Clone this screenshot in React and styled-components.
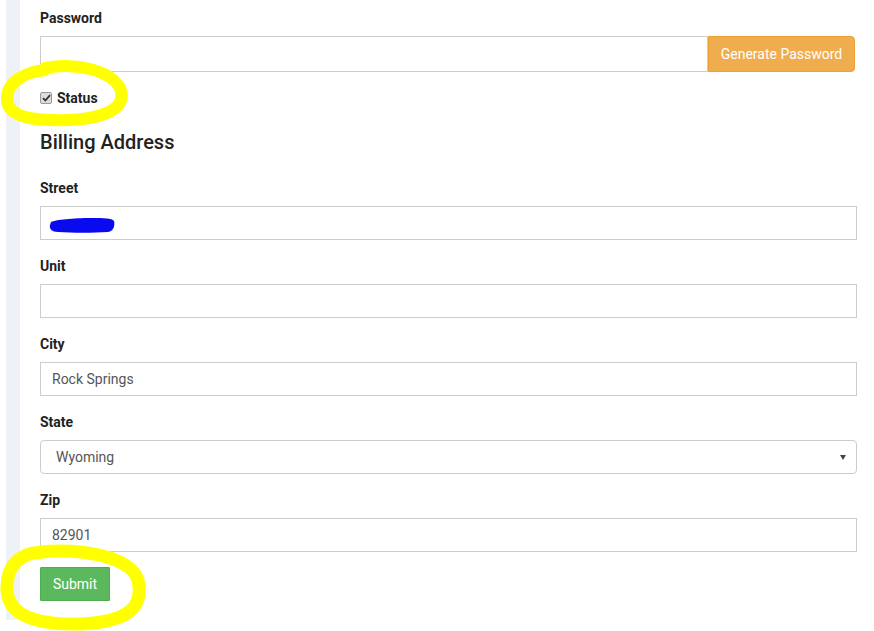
import React from "react";
import styled, { createGlobalStyle } from "styled-components";

const Global = createGlobalStyle`
  html, body { margin: 0; padding: 0; background: #fff; }
  body { font-family: Roboto, "Noto Sans", Arial, sans-serif; color: #222; }
  * { box-sizing: border-box; }
`;

const Page = styled.div`
  position: relative;
  display: flex;
  align-items: flex-start;
  width: 874px;
  min-height: 631px;
`;

const Strip = styled.div`
  width: 14px;
  margin-left: 6px;
  height: 620px;
  background: #eef2f7;
  flex: none;
`;

const Main = styled.div`
  flex: 1;
  padding: 8px 17px 19px 20px;
  display: flex;
  flex-direction: column;
`;

const Group = styled.div`
  display: flex;
  flex-direction: column;
  margin-bottom: ${(p) => p.$mb ?? 16}px;
`;

const Label = styled.label`
  display: block;
  font-size: 14px;
  font-weight: 700;
  line-height: 20px;
  margin-bottom: 8px;
  color: #222;
`;

const InputGroup = styled.div`
  display: flex;
  height: 36px;
  margin-right: 2px;
`;

const Input = styled.div`
  position: relative;
  flex: ${(p) => (p.$grow ? "1 1 auto" : "none")};
  height: ${(p) => p.$h ?? 34}px;
  border: 1px solid #ccc;
  border-radius: ${(p) => (p.$rounded ? "4px" : "0")};
  display: flex;
  align-items: center;
  justify-content: space-between;
  padding: 0 ${(p) => (p.$select ? 10 : 12)}px 0 ${(p) => (p.$select ? 15 : 11)}px;
  font-size: 14px;
  color: #555;
  background: #fff;
`;

const OrangeButton = styled.button`
  width: 147px;
  height: 36px;
  background: #f0ad4e;
  border: 1px solid #eea236;
  border-radius: 0 4px 4px 0;
  color: #fff;
  font-family: inherit;
  font-size: 14px;
  padding: 0;
  flex: none;
`;

const CheckRow = styled.div`
  display: flex;
  align-items: center;
  height: 20px;
  margin-top: 16px;
  gap: 5px;
  font-size: 14px;
  font-weight: 700;
`;

const Check = styled.span`
  width: 12px;
  height: 12px;
  border: 1px solid #999;
  border-radius: 2px;
  background: #ddd;
  display: flex;
  align-items: center;
  justify-content: center;
`;

const Heading = styled.h3`
  margin: 22px 0 24px;
  font-size: 20px;
  font-weight: 500;
  line-height: 24px;
  color: #222;
`;

const Caret = styled.span`
  width: 0;
  height: 0;
  border-left: 3.5px solid transparent;
  border-right: 3.5px solid transparent;
  border-top: 5px solid #444;
`;

const SubmitButton = styled.button`
  align-self: flex-start;
  width: 70px;
  height: 34px;
  margin-top: -1px;
  background: #5cb85c;
  border: 1px solid #4cae4c;
  border-radius: 1px;
  color: #fff;
  font-family: inherit;
  font-size: 14px;
  padding: 0;
`;

const Scribble = styled.svg`
  position: absolute;
  left: 7px;
  top: 6px;
`;

const Overlay = styled.svg`
  position: absolute;
  left: 0;
  top: 0;
  pointer-events: none;
`;

export default function App() {
  return (
    <Page>
      <Global />
      <Strip />
      <Main>
        <Group $mb={0}>
          <Label>Password</Label>
          <InputGroup>
            <Input $grow $h={36} />
            <OrangeButton>Generate Password</OrangeButton>
          </InputGroup>
        </Group>
        <CheckRow>
          <Check>
            <svg width="9" height="8" viewBox="0 0 9 8">
              <path d="M1 4.2 L3.4 6.5 L8 1.2" stroke="#333" strokeWidth="1.8" fill="none" />
            </svg>
          </Check>
          Status
        </CheckRow>
        <Heading>Billing Address</Heading>
        <Group>
          <Label>Street</Label>
          <Input>
            <Scribble width="68" height="22" viewBox="0 0 68 22">
              <path
                d="M3 9 C10 6 30 5 45 5 C55 5 64 5 66 8 C67 12 66 18 60 19 C45 20 25 20 10 19 C4 19 1 16 2 12 Z"
                fill="#0a0af0"
              />
            </Scribble>
          </Input>
        </Group>
        <Group>
          <Label>Unit</Label>
          <Input />
        </Group>
        <Group>
          <Label>City</Label>
          <Input>Rock Springs</Input>
        </Group>
        <Group>
          <Label>State</Label>
          <Input $rounded $select>
            Wyoming
            <Caret />
          </Input>
        </Group>
        <Group>
          <Label>Zip</Label>
          <Input>82901</Input>
        </Group>
        <SubmitButton>Submit</SubmitButton>
      </Main>
      <Overlay width="874" height="631" viewBox="0 0 874 631">
        <path
          d="M45 68 C75 62 110 70 120 88 C128 105 110 118 70 120 C35 121 8 118 7 100 C6 82 25 72 45 70"
          stroke="#ffff00"
          strokeWidth="12"
          fill="none"
          strokeLinecap="round"
        />
        <path
          d="M40 552 C80 548 130 556 138 580 C144 606 130 622 80 624 C30 625 8 612 7 590 C6 565 20 552 45 552"
          stroke="#ffff00"
          strokeWidth="13"
          fill="none"
          strokeLinecap="round"
        />
      </Overlay>
    </Page>
  );
}
